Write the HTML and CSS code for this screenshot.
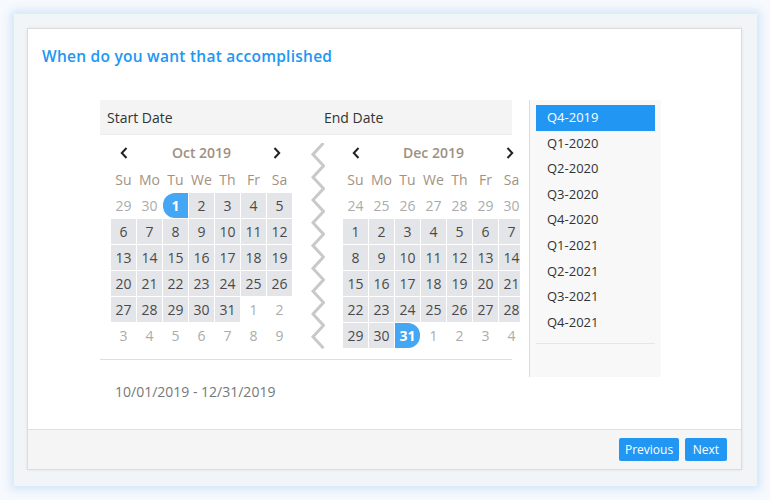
FILE: index.html
```html
<!DOCTYPE html>
<html>
<head>
<meta charset="utf-8">
<link rel="stylesheet" href="styles.css">
</head>
<body>
<div class="frame">
  <div class="card">
    <div class="main">
      <h1 class="title">When do you want that accomplished</h1>
      <div class="picker">
        <div class="calendars">
          <div class="heads">
            <div class="head">Start Date</div>
            <div class="head">End Date</div>
          </div>
          <div class="cals">
            <div class="cal cal-l">
              <div class="nav"><svg width="8" height="12" viewBox="0 0 8 12"><polyline points="6.5,1 1.8,6 6.5,11" fill="none" stroke="#222" stroke-width="2"/></svg></div>
              <div class="month">Oct 2019</div>
              <div class="nav nav-next"><svg width="8" height="12" viewBox="0 0 8 12"><polyline points="1.5,1 6.2,6 1.5,11" fill="none" stroke="#222" stroke-width="2"/></svg></div>
              <div class="dow">Su</div><div class="dow">Mo</div><div class="dow">Tu</div><div class="dow">We</div><div class="dow">Th</div><div class="dow">Fr</div><div class="dow">Sa</div>
              <div class="d off">29</div><div class="d off">30</div><div class="d start">1</div><div class="d in">2</div><div class="d in">3</div><div class="d in">4</div><div class="d in">5</div>
              <div class="d in">6</div><div class="d in">7</div><div class="d in">8</div><div class="d in">9</div><div class="d in">10</div><div class="d in">11</div><div class="d in">12</div>
              <div class="d in">13</div><div class="d in">14</div><div class="d in">15</div><div class="d in">16</div><div class="d in">17</div><div class="d in">18</div><div class="d in">19</div>
              <div class="d in">20</div><div class="d in">21</div><div class="d in">22</div><div class="d in">23</div><div class="d in">24</div><div class="d in">25</div><div class="d in">26</div>
              <div class="d in">27</div><div class="d in">28</div><div class="d in">29</div><div class="d in">30</div><div class="d in">31</div><div class="d off">1</div><div class="d off">2</div>
              <div class="d off">3</div><div class="d off">4</div><div class="d off">5</div><div class="d off">6</div><div class="d off">7</div><div class="d off">8</div><div class="d off">9</div>
            </div>
            <div class="zig">
              <svg width="14" height="206" viewBox="0 0 14 206"><polyline points="12.5,0 2,11.4 12.5,22.8 2,34.2 12.5,45.6 2,57 12.5,68.4 2,79.8 12.5,91.2 2,102.6 12.5,114 2,125.4 12.5,136.8 2,148.2 12.5,159.6 2,171 12.5,182.4 2,193.8 12.5,205.2" fill="none" stroke="#c9c9c9" stroke-width="3"/></svg>
            </div>
            <div class="cal cal-r">
              <div class="nav"><svg width="8" height="12" viewBox="0 0 8 12"><polyline points="6.5,1 1.8,6 6.5,11" fill="none" stroke="#222" stroke-width="2"/></svg></div>
              <div class="month">Dec 2019</div>
              <div class="nav"><svg width="8" height="12" viewBox="0 0 8 12"><polyline points="1.5,1 6.2,6 1.5,11" fill="none" stroke="#222" stroke-width="2"/></svg></div>
              <div class="dow">Su</div><div class="dow">Mo</div><div class="dow">Tu</div><div class="dow">We</div><div class="dow">Th</div><div class="dow">Fr</div><div class="dow">Sa</div>
              <div class="d off">24</div><div class="d off">25</div><div class="d off">26</div><div class="d off">27</div><div class="d off">28</div><div class="d off">29</div><div class="d off">30</div>
              <div class="d in">1</div><div class="d in">2</div><div class="d in">3</div><div class="d in">4</div><div class="d in">5</div><div class="d in">6</div><div class="d in">7</div>
              <div class="d in">8</div><div class="d in">9</div><div class="d in">10</div><div class="d in">11</div><div class="d in">12</div><div class="d in">13</div><div class="d in">14</div>
              <div class="d in">15</div><div class="d in">16</div><div class="d in">17</div><div class="d in">18</div><div class="d in">19</div><div class="d in">20</div><div class="d in">21</div>
              <div class="d in">22</div><div class="d in">23</div><div class="d in">24</div><div class="d in">25</div><div class="d in">26</div><div class="d in">27</div><div class="d in">28</div>
              <div class="d in">29</div><div class="d in">30</div><div class="d end">31</div><div class="d off">1</div><div class="d off">2</div><div class="d off">3</div><div class="d off">4</div>
            </div>
          </div>
          <div class="divider"></div>
        </div>
        <div class="ranges">
          <ul class="range-list">
            <li class="range active">Q4-2019</li>
            <li class="range">Q1-2020</li>
            <li class="range">Q2-2020</li>
            <li class="range">Q3-2020</li>
            <li class="range">Q4-2020</li>
            <li class="range">Q1-2021</li>
            <li class="range">Q2-2021</li>
            <li class="range">Q3-2021</li>
            <li class="range">Q4-2021</li>
          </ul>
          <div class="range-sep"></div>
        </div>
      </div>
      <div class="selected">10/01/2019 - 12/31/2019</div>
    </div>
    <div class="footer">
      <button class="btn btn-prev">Previous</button>
      <button class="btn btn-next">Next</button>
    </div>
  </div>
</div>
</body>
</html>
```

FILE: styles.css
```css
html, body {
  margin: 0;
  padding: 0;
}
body {
  width: 770px;
  height: 500px;
  background: #f6f9fd;
  font-family: "Open Sans", "Liberation Sans", sans-serif;
  overflow: hidden;
}
.frame {
  margin: 14px 0 0 14px;
  width: 743px;
  height: 472px;
  box-sizing: border-box;
  padding: 14px 15px 16px 13px;
  background: #f2f5f8;
  box-shadow: 0 0 8px 3px rgba(100, 170, 240, 0.25);
}
.card {
  height: 100%;
  box-sizing: border-box;
  background: #fff;
  border: 1px solid #dcdcdc;
  box-shadow: 0 0 3px rgba(0, 0, 0, 0.08);
  display: flex;
  flex-direction: column;
}
.main {
  flex: 1;
}
.title {
  margin: 0;
  padding: 17px 0 0 14px;
  font-size: 15.5px;
  line-height: 20px;
  font-weight: 600;
  color: #2196f3;
  letter-spacing: 0.25px;
}
.picker {
  display: flex;
  margin: 34px 0 0 72px;
}
.calendars {
  width: 412px;
  flex-shrink: 0;
}
.heads {
  display: grid;
  grid-template-columns: 217px 1fr;
  height: 35px;
  background: #f4f4f4;
  border-bottom: 1px solid #ececec;
  box-sizing: border-box;
}
.head {
  padding-left: 7px;
  font-size: 14px;
  line-height: 35px;
  color: #333;
}
.cals {
  display: flex;
  padding: 5px 0 0 11px;
  width: 417px;
}
.cal {
  display: grid;
  grid-template-columns: repeat(7, 25px);
  grid-template-rows: 26px 25px repeat(6, 25px);
  gap: 1px;
  flex-shrink: 0;
}
.cal-r {
  grid-template-columns: repeat(6, 25px) 21px;
}
.cal-r > :nth-child(7n+10) {
  padding-left: 4px;
}
.nav {
  display: flex;
  align-items: center;
  justify-content: center;
}
.nav-next {
  padding-right: 5px;
}
.month {
  grid-column: span 5;
  text-align: center;
  font-size: 14px;
  line-height: 26px;
  font-weight: 600;
  color: #9e8f82;
}
.dow {
  text-align: center;
  font-size: 14px;
  line-height: 25px;
  color: #a3927f;
}
.d {
  text-align: center;
  font-size: 14px;
  line-height: 25px;
  color: #4a4a4a;
}
.d.off {
  color: #ababab;
}
.d.in {
  background: #e3e5e8;
}
.d.start {
  background: #45a6f4;
  color: #fff;
  font-weight: 700;
  border-radius: 12px 0 0 12px;
}
.d.end {
  background: #45a6f4;
  color: #fff;
  font-weight: 700;
  border-radius: 0 12px 12px 0;
}
.zig {
  width: 51px;
  flex-shrink: 0;
  display: flex;
  justify-content: center;
  padding-top: 3px;
}
.divider {
  margin-top: 10px;
  border-top: 1px solid #dedede;
}
.ranges {
  margin-left: 17px;
  width: 132px;
  height: 277px;
  box-sizing: border-box;
  border-left: 1px solid #dcdcdc;
  background: #f8f8f8;
  padding: 5px 6px 0;
}
.range-list {
  list-style: none;
  margin: 0;
  padding: 0;
}
.range {
  height: 25.6px;
  line-height: 25.6px;
  padding-left: 11px;
  font-size: 13px;
  color: #333;
}
.range.active {
  background: #2196f3;
  color: #fff;
}
.range-sep {
  margin-top: 8px;
  border-top: 1px solid #e6e6e6;
}
.selected {
  margin: 5px 0 0 87px;
  font-size: 14px;
  line-height: 20px;
  color: #777;
}
.footer {
  height: 40px;
  box-sizing: border-box;
  border-top: 1px solid #e0e0e0;
  background: #f5f5f5;
  display: flex;
  justify-content: flex-end;
  align-items: flex-start;
  gap: 6px;
  padding: 8px 14px 0 0;
}
.btn {
  height: 23px;
  border: none;
  border-radius: 2px;
  background: #2196f3;
  color: #fff;
  font-family: "Open Sans", "Liberation Sans", sans-serif;
  font-size: 12px;
  line-height: 23px;
}
.btn-prev {
  padding: 0 5.5px;
}
.btn-next {
  padding: 0 8px;
}
```
